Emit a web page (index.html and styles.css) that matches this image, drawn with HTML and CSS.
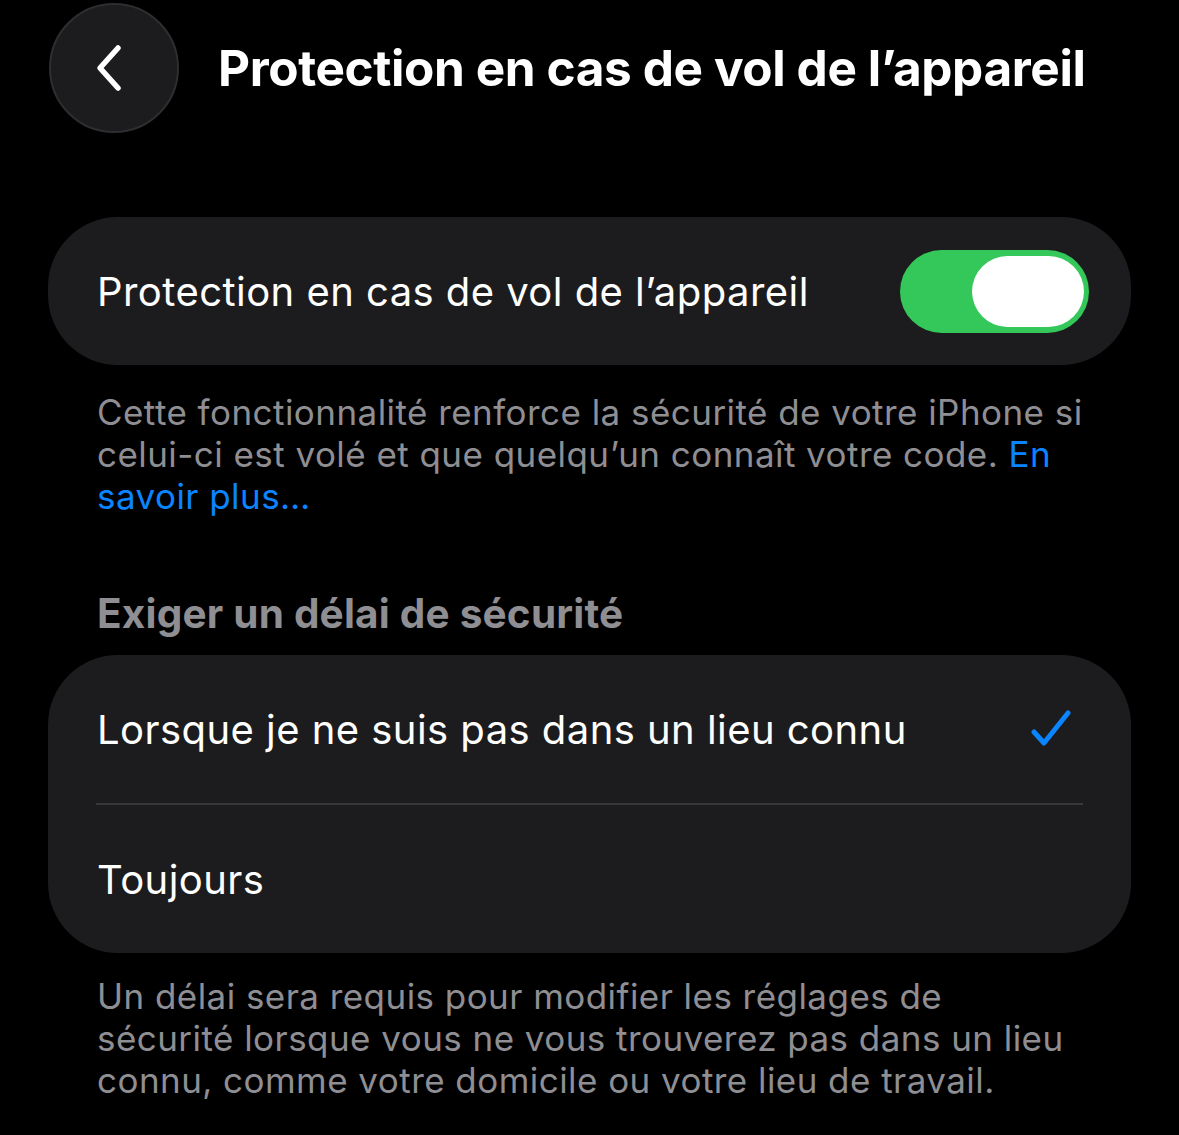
FILE: index.html
```html
<!DOCTYPE html>
<html lang="fr">
<head>
    <meta charset="UTF-8">
    <meta name="viewport" content="width=device-width, initial-scale=1.0">
    <title>Protection en cas de vol de l'appareil</title>
    <link rel="stylesheet" href="styles.css">
</head>
<body>
    <header class="nav">
        <button class="back" aria-label="Retour">
            <svg width="40" height="50" viewBox="0 0 40 50">
                <path d="M27 5 L9 25 L27 45" fill="none" stroke="#fff" stroke-width="5.5" stroke-linecap="round" stroke-linejoin="round"/>
            </svg>
        </button>
        <h1 class="nav-title">Protection en cas de vol de l’appareil</h1>
    </header>

    <main class="content">
        <div class="group">
            <div class="row">
                <span class="row-label">Protection en cas de vol de l’appareil</span>
                <div class="toggle on"><div class="knob"></div></div>
            </div>
        </div>
        <p class="footer">Cette fonctionnalité renforce la sécurité de votre iPhone si celui-ci est volé et que quelqu’un connaît votre code. <a href="#" class="link">En savoir plus…</a></p>

        <h2 class="section-title">Exiger un délai de sécurité</h2>
        <div class="group">
            <div class="row">
                <span class="row-label">Lorsque je ne suis pas dans un lieu connu</span>
                <svg class="check" width="40" height="38" viewBox="0 0 40 38">
                    <path d="M3 22 L13 33 L37 3" fill="none" stroke="#0a84ff" stroke-width="5" stroke-linecap="round" stroke-linejoin="round"/>
                </svg>
            </div>
            <div class="sep"></div>
            <div class="row">
                <span class="row-label">Toujours</span>
            </div>
        </div>
        <p class="footer narrow">Un délai sera requis pour modifier les réglages de sécurité lorsque vous ne vous trouverez pas dans un lieu connu, comme votre domicile ou votre lieu de travail.</p>
    </main>
</body>
</html>
```

FILE: styles.css
```css
body {
    margin: 0;
    background-color: #000;
    color: #fff;
    font-family: Inter, "Noto Sans", sans-serif;
    overflow: hidden;
}
.nav {
    display: flex;
    align-items: center;
    gap: 39px;
    padding: 3px 48px 0 49px;
}
.back {
    width: 130px;
    height: 130px;
    border-radius: 50%;
    background-color: #1c1c1e;
    border: 2px solid #2e2e30;
    display: flex;
    align-items: center;
    justify-content: center;
    padding: 0 6px 0 0;
    flex-shrink: 0;
}
.nav-title {
    margin: 0;
    font-size: 49.5px;
    font-weight: 700;
    letter-spacing: -0.4px;
    white-space: nowrap;
}
.content {
    padding: 84px 48px 0 48px;
}
.group {
    background-color: #1c1c1e;
    border-radius: 70px;
    overflow: hidden;
}
.row {
    display: flex;
    align-items: center;
    justify-content: space-between;
    height: 148px;
    padding: 0 42px 0 49px;
}
.row-label {
    font-size: 40px;
    letter-spacing: 0.45px;
}
.sep {
    height: 2px;
    background-color: #38383a;
    margin: 0 48px 0 48px;
}
.toggle {
    width: 189px;
    height: 83px;
    border-radius: 42px;
    background-color: #34c759;
    display: flex;
    align-items: center;
    justify-content: flex-end;
    padding: 0 5px;
    box-sizing: border-box;
}
.knob {
    width: 112px;
    height: 71px;
    border-radius: 36px;
    background-color: #fff;
}
.check {
    margin-right: 18px;
}
.footer {
    margin: 0;
    padding: 26px 44px 0 49px;
    font-size: 35px;
    line-height: 42px;
    color: #8e8e93;
    letter-spacing: 0.45px;
}
.footer.narrow {
    padding-top: 22px;
    padding-right: 56px;
}
.link {
    color: #0a84ff;
    text-decoration: none;
}
.section-title {
    margin: 0;
    padding: 72px 49px 17px 49px;
    font-size: 40.5px;
    font-weight: 700;
    letter-spacing: 0.2px;
    color: #8e8e93;
}
```
